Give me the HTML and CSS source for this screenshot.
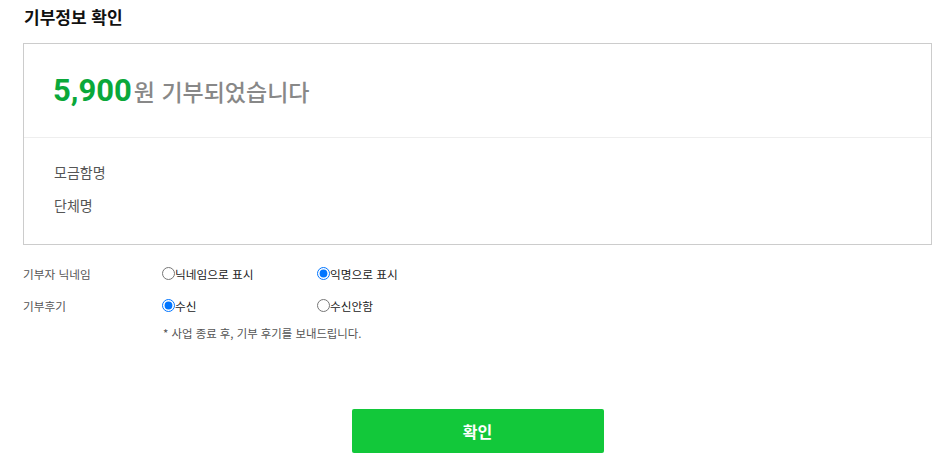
FILE: index.html
```html
<!DOCTYPE html>
<html lang="ko">
<head>
<meta charset="utf-8">
<link rel="stylesheet" href="styles.css">
</head>
<body>
<div class="page">
  <h2 class="title">기부정보 확인</h2>
  <div class="box">
    <div class="box-top">
      <p class="done"><span class="amount">5,900</span><span class="won">원 기부되었습니다</span></p>
    </div>
    <div class="box-bottom">
      <p class="info">모금함명</p>
      <p class="info">단체명</p>
    </div>
  </div>
  <div class="options">
    <div class="row">
      <span class="label">기부자 닉네임</span>
      <label class="opt"><input type="radio" name="nick">닉네임으로 표시</label>
      <label class="opt"><input type="radio" name="nick" checked>익명으로 표시</label>
    </div>
    <div class="row">
      <span class="label">기부후기</span>
      <label class="opt"><input type="radio" name="review" checked>수신</label>
      <label class="opt"><input type="radio" name="review">수신안함</label>
    </div>
    <p class="note">* 사업 종료 후, 기부 후기를 보내드립니다.</p>
  </div>
  <div class="actions">
    <button class="confirm">확인</button>
  </div>
</div>
</body>
</html>
```
FILE: styles.css
```css
html, body {
  margin: 0;
  padding: 0;
  background: #fff;
}
body {
  font-family: "Noto Sans CJK KR", "Noto Sans", sans-serif;
  color: #333;
}
.page {
  padding: 6px 5px 0 23px;
}
.title {
  margin: 0 0 15px 1px;
  font-size: 17px;
  font-weight: 700;
  line-height: 22px;
  color: #111;
}
.box {
  border: 1px solid #cccccc;
}
.box-top {
  height: 93px;
  border-bottom: 1px solid #eeeeee;
  display: flex;
  align-items: center;
  padding-left: 29px;
}
.done {
  margin: 0;
  display: flex;
  align-items: baseline;
}
.amount {
  font-family: Roboto, "Liberation Sans", sans-serif;
  font-size: 31px;
  font-weight: 700;
  color: #0aa83a;
  letter-spacing: 0;
}
.won {
  font-size: 23px;
  font-weight: 500;
  color: #888888;
  margin-left: 2px;
}
.box-bottom {
  padding: 18px 30px 22px;
}
.info {
  margin: 0;
  font-size: 14px;
  line-height: 33px;
  color: #555;
}
.options {
  margin-top: 12px;
}
.row {
  display: flex;
  align-items: center;
  height: 32px;
  font-size: 11.7px;
}
.label {
  width: 139px;
  color: #555;
}
.opt {
  width: 155px;
  display: flex;
  align-items: center;
  color: #222;
}
.opt input {
  margin: 0;
  width: 13px;
  height: 13px;
}
.note {
  margin: 4px 0 0 140px;
  font-size: 11.4px;
  color: #555;
}
.actions {
  display: flex;
  justify-content: center;
  margin-top: 68px;
}
.confirm {
  width: 252px;
  height: 44px;
  border: none;
  border-radius: 2px;
  background: #12c83a;
  color: #fff;
  font-family: "Noto Sans CJK KR", sans-serif;
  font-size: 16px;
  font-weight: 700;
}
```
